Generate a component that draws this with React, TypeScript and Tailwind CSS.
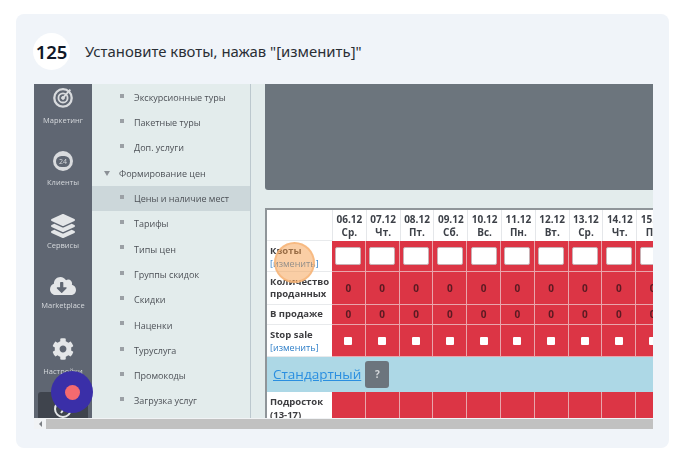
import { FaCloudDownloadAlt, FaCog, FaLayerGroup } from 'react-icons/fa';

const dates = [
  ['06.12', 'Ср.'],
  ['07.12', 'Чт.'],
  ['08.12', 'Пт.'],
  ['09.12', 'Сб.'],
  ['10.12', 'Вс.'],
  ['11.12', 'Пн.'],
  ['12.12', 'Вт.'],
  ['13.12', 'Ср.'],
  ['14.12', 'Чт.'],
  ['15.12', 'Пт.'],
];

const menu = [
  { label: 'Экскурсионные туры' },
  { label: 'Пакетные туры' },
  { label: 'Доп. услуги' },
  { label: 'Формирование цен', parent: true },
  { label: 'Цены и наличие мест', active: true },
  { label: 'Тарифы' },
  { label: 'Типы цен' },
  { label: 'Группы скидок' },
  { label: 'Скидки' },
  { label: 'Наценки' },
  { label: 'Туруслуга' },
  { label: 'Промокоды' },
  { label: 'Загрузка услуг' },
];

const Cells = ({ children, height }: { children: React.ReactNode; height: string }) => (
  <>
    {dates.map((d) => (
      <div
        key={d[0]}
        className={`w-[33.8px] shrink-0 ${height} flex items-center justify-center bg-[#dc3545] border-r border-b border-[#e9a5ac] text-[10px] font-bold text-[#5a1a22]`}
      >
        {children}
      </div>
    ))}
  </>
);

const Row = ({ label, children, height, top }: { label: React.ReactNode; children: React.ReactNode; height: string; top?: boolean }) => (
  <div className="flex">
    <div className={`w-[65px] shrink-0 ${height} px-[3px] flex flex-col ${top ? 'justify-start pt-[4px]' : 'justify-center'} bg-white border-b border-[#e8eaec] text-[9.5px] leading-[12.5px] font-bold text-[#3d3d40]`}>
      {label}
    </div>
    <Cells height={height}>{children}</Cells>
  </div>
);

const Sidebar = () => (
  <div className="w-[58px] shrink-0 h-full overflow-hidden bg-[#5f6672] flex flex-col items-center text-[7.5px] text-[#d5d8dc]">
    <svg className="mt-[2px] shrink-0" width="22" height="22" viewBox="0 0 24 24" fill="none" stroke="#d9dbde">
      <circle cx="12" cy="13" r="9.5" strokeWidth="2.5" />
      <circle cx="12" cy="13" r="5" strokeWidth="2" />
      <circle cx="12" cy="13" r="1.6" fill="#d9dbde" />
      <path d="M12 13 L20 4" strokeWidth="2" />
    </svg>
    <span className="mt-[7px] leading-[10px]">Маркетинг</span>
    <div className="mt-[26px] shrink-0 w-[20px] h-[20px] rounded-full bg-[#d9dbde] flex items-center justify-center">
      <span className="w-[14px] h-[11px] rounded-full bg-[#5f6672] text-[7px] leading-[11px] text-center text-[#d9dbde]">24</span>
    </div>
    <span className="mt-[6px] leading-[10px]">Клиенты</span>
    <FaLayerGroup className="mt-[27px] shrink-0 w-[24px] h-[24px] text-[#e4e6e8]" />
    <span className="mt-[2px] leading-[10px]">Сервисы</span>
    <FaCloudDownloadAlt className="mt-[23px] shrink-0 w-[26px] h-[26px] text-[#e4e6e8]" />
    <span className="mt-[1px] leading-[10px]">Marketplace</span>
    <FaCog className="mt-[28px] shrink-0 w-[22px] h-[22px] text-[#e4e6e8]" />
    <span className="mt-[6px] leading-[10px]">Настройки</span>
    <div className="mt-[16px] shrink-0 w-[50px] h-[30px] rounded-[3px] bg-[#3f444d] flex justify-center pt-[7px]">
      <svg width="20" height="20" viewBox="0 0 20 20" fill="none" stroke="#e4e6e8" strokeWidth="2">
        <circle cx="10" cy="10" r="8" />
        <path d="M6 7 H13 L8 14" />
      </svg>
    </div>
  </div>
);

const Menu = () => (
  <div className="w-[159px] shrink-0 h-full overflow-hidden bg-[#e3ecec] border-r border-[#bcc8ce] flex flex-col pt-[1px] text-[9px] text-[#4d5157]">
    {menu.map((m) => (
      <div
        key={m.label}
        className={`h-[25.3px] shrink-0 flex items-center ${m.active ? 'bg-[#ccd7da]' : ''} ${m.parent ? 'pl-[12px]' : 'pl-[28px]'}`}
      >
        {m.parent ? (
          <span className="w-0 h-0 mr-[9px] border-x-[3px] border-x-transparent border-t-[5px] border-t-[#8b9096]" />
        ) : (
          <span className="w-[4px] h-[4px] mr-[10px] mb-[4px] bg-[#9ba0a5]" />
        )}
        {m.label}
      </div>
    ))}
  </div>
);

const Grid = () => (
  <div className="relative border-l-2 border-t-2 border-[#8f9599] bg-white w-max">
    <div className="flex">
      <div className="w-[65px] shrink-0 h-[31px] border-b border-[#e8eaec]" />
      {dates.map((d) => (
        <div
          key={d[0]}
          className="w-[33.8px] shrink-0 h-[31px] border-l border-[#e5e7ea] flex flex-col items-center justify-center text-[10px] leading-[13px] font-bold text-[#3d4148]"
        >
          <span>{d[0]}</span>
          <span>{d[1]}</span>
        </div>
      ))}
    </div>
    <Row
      top
      height="h-[31px]"
      label={
        <>
          <span>Квоты</span>
          <span className="font-normal text-[9px] text-[#2f7fc8]">[изменить]</span>
        </>
      }
    >
      <span className="w-[26px] h-[18px] bg-white rounded-[2px] border border-[#c9b0b4]" />
    </Row>
    <Row height="h-[33px]" label={<span>Количество проданных</span>}>
      0
    </Row>
    <Row height="h-[20px]" label={<span>В продаже</span>}>
      0
    </Row>
    <Row
      top
      height="h-[32px]"
      label={
        <>
          <span>Stop sale</span>
          <span className="font-normal text-[9px] text-[#2f7fc8]">[изменить]</span>
        </>
      }
    >
      <span className="w-[8px] h-[8px] bg-white rounded-[1px]" />
    </Row>
    <div className="h-[35px] bg-[#add8e6] flex items-center pl-[6px] gap-[4px]">
      <span className="text-[13.5px] text-[#2a8fe0] underline">Стандартный</span>
      <span className="w-[24px] h-[27px] rounded-[3px] bg-[#6c757d] flex items-center justify-center text-[10px] font-bold text-[#d5d8db]">?</span>
    </div>
    <Row
      top
      height="h-[30px]"
      label={
        <>
          <span>Подросток</span>
          <span>(13-17)</span>
        </>
      }
    >
      {null}
    </Row>
  </div>
);

export default function App() {
  return (
    <div className="w-[679px] h-[449px] bg-white overflow-hidden pl-[16px] pr-[10px] pt-[14px] font-['Noto_Sans',sans-serif]">
      <div className="h-[434px] rounded-[8px] bg-[#f0f4f9] pl-[18px] pr-[16px] pt-[19px]">
        <div className="flex items-center h-[37px] gap-[15px] -ml-[1px]">
          <span className="w-[37px] h-[37px] rounded-full bg-white flex items-center justify-center text-[18.5px] font-semibold text-[#111827]">125</span>
          <span className="text-[14.9px] text-[#2a2e35]">Установите квоты, нажав "[изменить]"</span>
        </div>
        <div className="relative mt-[14px] w-[619px]">
          <div className="h-[334px] flex overflow-hidden blur-[0.5px] font-['Open_Sans',sans-serif]">
            <Sidebar />
            <Menu />
            <div className="flex-1 min-w-0 bg-[#e3ecec] pl-[14px] overflow-hidden">
              <div className="h-[106px] bg-[#6c757d] rounded-bl-[3px]" />
              <div className="mt-[18px]">
                <Grid />
              </div>
            </div>
          </div>
          <div className="h-[11px] bg-[#f1f3f5] flex items-center blur-[0.4px]">
            <span className="w-[12px] flex justify-center">
              <span className="w-0 h-0 border-y-[3px] border-y-transparent border-r-[3px] border-r-[#7b7f84]" />
            </span>
            <div className="flex-1 h-[10px] bg-[#c1c1c1]" />
          </div>

          {/* hotspot over [изменить] */}
          <div className="absolute left-[240px] top-[158px] w-[41px] h-[41px] rounded-full bg-[#f59e4c]/50 border-2 border-[#f7b57a]/80" />

          {/* step marker */}
          <div className="absolute left-[17px] top-[287px] w-[42px] h-[42px] rounded-full bg-[#3a2fa8] flex items-center justify-center">
            <span className="w-[15px] h-[15px] rounded-full bg-[#f46a6f]" />
          </div>
        </div>
      </div>
    </div>
  );
}
